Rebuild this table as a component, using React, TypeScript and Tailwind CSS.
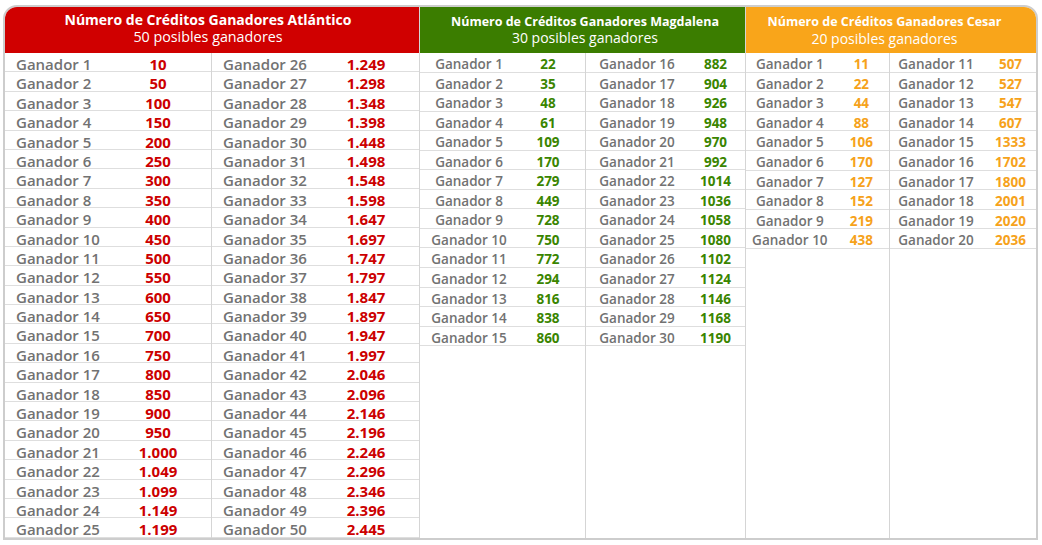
import React from "react";

const atl = [
  "10","50","100","150","200","250","300","350","400","450","500","550","600","650","700","750","800","850","900","950","1.000","1.049","1.099","1.149","1.199",
  "1.249","1.298","1.348","1.398","1.448","1.498","1.548","1.598","1.647","1.697","1.747","1.797","1.847","1.897","1.947","1.997","2.046","2.096","2.146","2.196","2.246","2.296","2.346","2.396","2.445",
];
const mag = [
  "22","35","48","61","109","170","279","449","728","750","772","294","816","838","860",
  "882","904","926","948","970","992","1014","1036","1058","1080","1102","1124","1146","1168","1190",
];
const ces = [
  "11","22","44","88","106","170","127","152","219","438",
  "507","527","547","607","1333","1702","1800","2001","2020","2036",
];

function Rows({
  start,
  values,
  variant,
  side,
}: {
  start: number;
  values: string[];
  variant: "atl" | "mag" | "ces";
  side: "l" | "r";
}) {
  return (
    <div className="flex flex-col">
      {values.map((v, i) => {
        const n = start + i;
        if (variant === "atl") {
          return (
            <div
              key={n}
              className="h-[19.4px] border-b border-[#dedede] flex pt-[2px] leading-[19.4px] text-[15px]"
            >
              <div className="w-[110px] pl-[11px] font-semibold text-[#727272]">
                Ganador {n}
              </div>
              <div
                className={
                  "text-center font-bold text-[#cc0000] " +
                  (side === "l" ? "w-[86px]" : "w-[88px]")
                }
              >
                {v}
              </div>
            </div>
          );
        }
        if (variant === "mag") {
          return (
            <div
              key={n}
              className="h-[19.55px] border-b border-[#dedede] flex pt-[2px] leading-[19.55px] text-[13.5px]"
            >
              <div
                className={
                  "text-center font-semibold text-[#727272] " +
                  (side === "l" ? "w-[98px]" : "w-[102px]")
                }
              >
                Ganador {n}
              </div>
              <div
                className={
                  "text-center font-bold text-[#3a8500] " +
                  (side === "l" ? "w-[60px]" : "w-[55px]")
                }
              >
                {v}
              </div>
            </div>
          );
        }
        return (
          <div
            key={n}
            className="h-[19.6px] border-b border-[#dedede] flex pt-[2px] leading-[19.6px] text-[13.5px]"
          >
            <div className="w-[92px] text-center font-semibold text-[#727272]">
              Ganador {n}
            </div>
            <div
              className={
                "text-center font-bold text-[#f6a21b] " +
                (side === "l" ? "w-[58px]" : "w-[57px]")
              }
            >
              {v}
            </div>
          </div>
        );
      })}
    </div>
  );
}

export default function App() {
  return (
    <div className="w-[1042px] h-[545px] bg-white font-['Open_Sans','Liberation_Sans',sans-serif] pt-[5px] pl-[3px]">
      <div className="w-[1035px] h-[535px] border-2 border-[#cdcdcd] rounded-t-[14px] overflow-hidden flex">
        {/* Atlántico */}
        <div className="w-[415px] border-r border-[#d5d5d5] flex flex-col shrink-0">
          <div className="h-[46px] bg-[#d00000] text-white text-center pt-[5px] pr-[8px] leading-[16.5px]">
            <div className="text-[14px] font-bold">Número de Créditos Ganadores Atlántico</div>
            <div className="text-[14.3px] font-normal">50 posibles ganadores</div>
          </div>
          <div className="flex flex-1">
            <div className="w-[207px] border-r border-[#d5d5d5]">
              <Rows start={1} values={atl.slice(0, 25)} variant="atl" side="l" />
            </div>
            <div className="w-[207px]">
              <Rows start={26} values={atl.slice(25)} variant="atl" side="r" />
            </div>
          </div>
        </div>
        {/* Magdalena */}
        <div className="w-[326px] border-r border-[#d5d5d5] flex flex-col shrink-0">
          <div className="h-[46px] bg-[#3b7d00] text-white text-center pt-[7px] pl-[5px] leading-[16px]">
            <div className="text-[12.5px] font-bold">Número de Créditos Ganadores Magdalena</div>
            <div className="text-[14px] font-normal">30 posibles ganadores</div>
          </div>
          <div className="flex flex-1">
            <div className="w-[166px] border-r border-[#d5d5d5]">
              <Rows start={1} values={mag.slice(0, 15)} variant="mag" side="l" />
            </div>
            <div className="w-[159px]">
              <Rows start={16} values={mag.slice(15)} variant="mag" side="r" />
            </div>
          </div>
        </div>
        {/* Cesar */}
        <div className="flex-1 flex flex-col">
          <div className="h-[46px] bg-[#f9a51a] text-white text-center pt-[7px] pr-[16px] leading-[16.5px]">
            <div className="text-[12.5px] font-bold">Número de Créditos Ganadores Cesar</div>
            <div className="text-[14px] font-normal">20 posibles ganadores</div>
          </div>
          <div className="flex flex-1">
            <div className="w-[144px] border-r border-[#d5d5d5]">
              <Rows start={1} values={ces.slice(0, 10)} variant="ces" side="l" />
            </div>
            <div className="flex-1">
              <Rows start={11} values={ces.slice(10)} variant="ces" side="r" />
            </div>
          </div>
        </div>
      </div>
    </div>
  );
}
